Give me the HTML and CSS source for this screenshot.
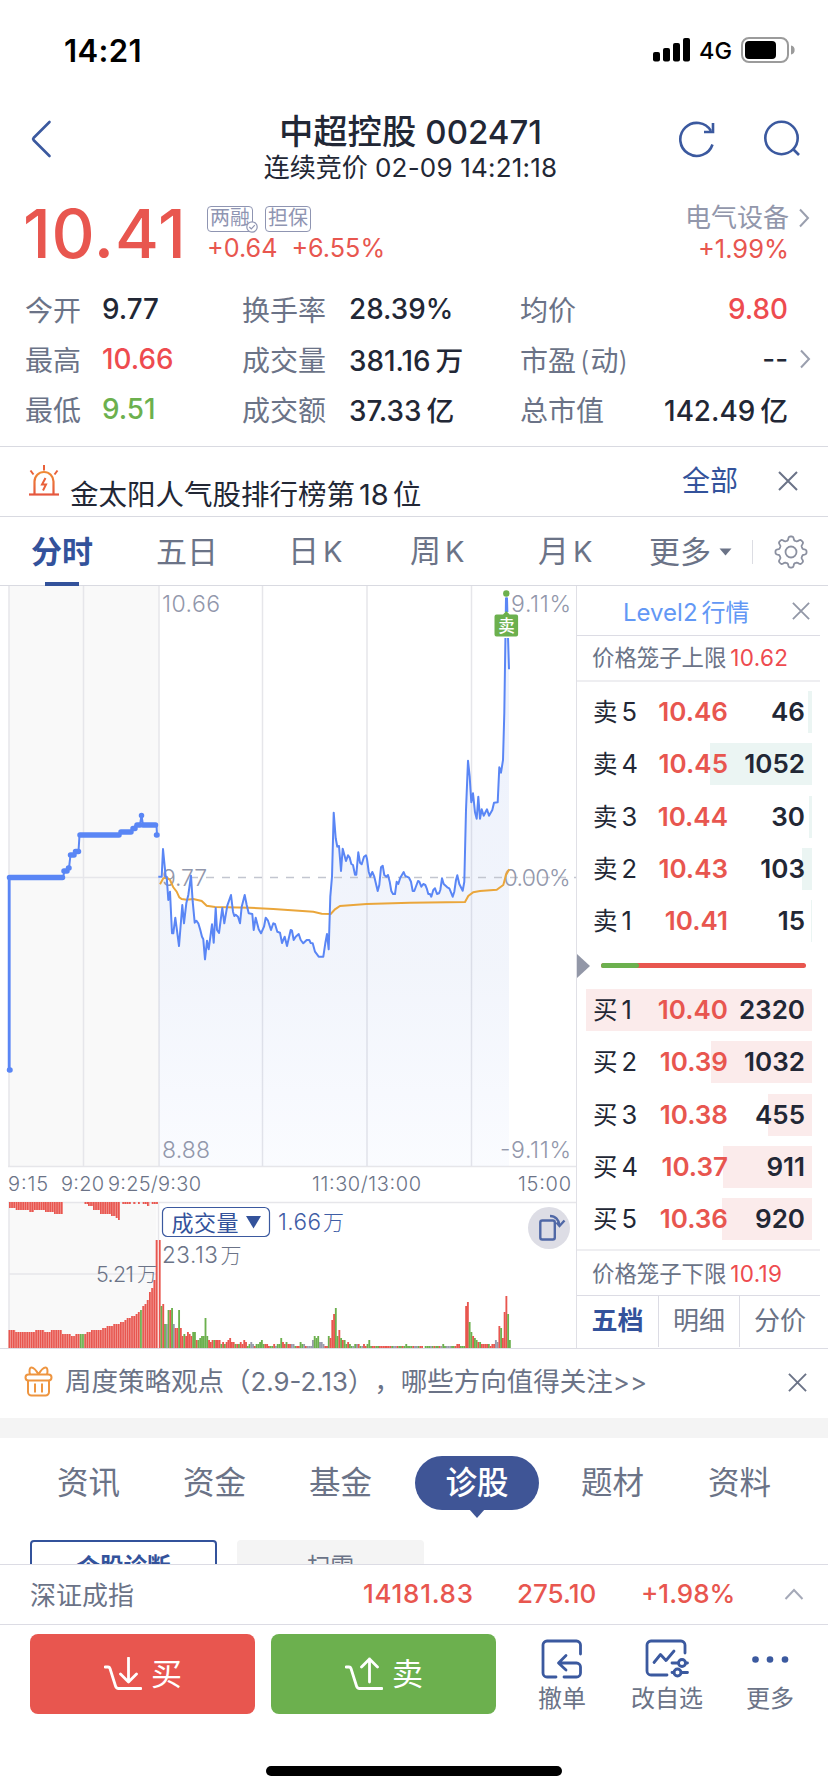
FILE: index.html
```html
<!DOCTYPE html>
<html lang="zh-CN">
<head>
<meta charset="utf-8">
<title>中超控股 002471</title>
<link rel="stylesheet" href="styles.css">
</head>
<body>
<div class="app">
  <div class="status">
    <span class="clock">14:21</span>
    <div class="status-right">
      <svg width="38" height="24" viewBox="0 0 38 24"><rect x="0" y="14" width="7" height="9.5" rx="2"/><rect x="10" y="10" width="7" height="13.5" rx="2"/><rect x="20" y="5" width="7" height="18.5" rx="2"/><rect x="30" y="0" width="7" height="23.5" rx="2"/></svg>
      <span class="net">4G</span>
      <svg width="54" height="26" viewBox="0 0 54 26"><rect x="1" y="1" width="46" height="24" rx="7" fill="none" stroke="#9b9b9b" stroke-width="2"/><rect x="4" y="4" width="31" height="18" rx="4"/><path d="M50 8.5a4.6 4.6 0 0 1 0 9z" fill="#9b9b9b"/></svg>
    </div>
  </div>

  <header class="header">
    <svg class="back" width="22" height="40" viewBox="0 0 22 40"><path d="M19.500 3 3.500 19a1.500 1.500 0 0 0 0 2l16 16"/></svg>
    <div class="titles">
      <div class="title">中超控股 <span class="code">002471</span></div>
      <div class="subtitle">连续竞价 <span class="when">02-09 14:21:18</span></div>
    </div>
    <div class="head-icons">
      <svg width="38" height="38" viewBox="0 0 38 38"><path d="M34.500 24.500a16.500 16.500 0 1 1-1.500-13.500"/><path d="M35 3v9h-9"/></svg>
      <svg width="38" height="38" viewBox="0 0 38 38"><circle cx="18.500" cy="18" r="16.200"/><path d="m30 29 6 6"/></svg>
    </div>
  </header>

  <section class="quote">
    <div class="price">10.41</div>
    <div class="change">
      <div class="tags"><span class="tag">两融<svg class="tick" width="12" height="12" viewBox="0 0 12 12"><circle cx="6" cy="6" r="5.200"/><path d="m3.300 6 2 2 3.500-3.800"/></svg></span><span class="tag">担保</span></div>
      <div class="delta"><span>+0.64</span><span>+6.55%</span></div>
    </div>
    <div class="sector">
      <div class="sector-name">电气设备</div>
      <div class="sector-pct">+1.99%</div>
    </div>
    <svg class="chev" width="12" height="20" viewBox="0 0 12 20"><path d="m2 1.500 8 8.500-8 8.500"/></svg>
  </section>

  <section class="stats">
    <span class="lbl">今开</span><span class="val">9.77</span><span class="lbl">换手率</span><span class="val">28.39%</span><span class="lbl">均价</span><span class="val end up">9.80</span><i></i>
    <span class="lbl">最高</span><span class="val up">10.66</span><span class="lbl">成交量</span><span class="val">381.16<b>万</b></span><span class="lbl">市盈<em>(</em>动<em>)</em></span><span class="val end dash">--</span><svg class="chev" width="12" height="20" viewBox="0 0 12 20"><path d="m2 1.500 8 8.500-8 8.500"/></svg>
    <span class="lbl">最低</span><span class="val down">9.51</span><span class="lbl">成交额</span><span class="val">37.33<b>亿</b></span><span class="lbl">总市值</span><span class="val end">142.49<b>亿</b></span><i></i>
  </section>

  <section class="alert">
    <svg class="siren" width="32" height="34" viewBox="0 0 32 34"><defs><linearGradient id="sg" gradientUnits="userSpaceOnUse" x1="0" y1="8" x2="0" y2="31"><stop offset="0" stop-color="#f08a35"/><stop offset="1" stop-color="#e5563f"/></linearGradient></defs><g fill="none" stroke="url(#sg)" stroke-width="2.200"><path d="M6.500 30V17.500a9.500 9.500 0 0 1 19 0V30"/><path d="M1 30.500h30"/></g><path d="M16 1v5.500M2.500 6.500l3 4M29.500 6.500l-3 4" stroke="#e9613a" stroke-width="2"/><path d="m17.500 14-3.500 6.500h4l-3 6" fill="none" stroke="#e9613a" stroke-width="2"/></svg>
    <span class="alert-text">金太阳人气股排行榜第<span class="num">18</span>位</span>
    <span class="all">全部</span>
    <svg class="x" width="20" height="20" viewBox="0 0 20 20"><path d="m1 1 18 18M19 1 1 19"/></svg>
  </section>

  <nav class="periods">
    <span class="on">分时</span><span>五日</span><span>日<em>K</em></span><span>周<em>K</em></span><span>月<em>K</em></span><span>更多</span>
    <svg class="caret" width="13" height="8" viewBox="0 0 13 8"><path d="M0.500 0.500h12l-6 7z"/></svg>
    <i class="sep"></i>
    <svg class="gear" width="34" height="34" viewBox="0 0 34 34"><path id="gear"/><circle cx="17" cy="17" r="5.500"/></svg>
  </nav>

  <main class="market">
    <svg class="chart" width="576" height="762" viewBox="0 586 576 762">
      <defs><linearGradient id="area" x1="0" y1="0" x2="0" y2="1"><stop offset="0" stop-color="#5a86f5" stop-opacity=".11"/><stop offset=".65" stop-color="#5a7fd0" stop-opacity=".08"/><stop offset="1" stop-color="#5a86f5" stop-opacity=".03"/></linearGradient></defs>
      <rect x="8.500" y="586" width="150.500" height="580" fill="#f9f9f9"/>
      <rect x="8.500" y="1203" width="148" height="145" fill="#f9f9f9"/>
      <g stroke="#e6e6ea" stroke-width="1.500" fill="none">
        <path d="M9 586V1166M83.500 586V1166M159 586V1166M262.500 586V1166M367 586V1166M471.500 586V1166M8 1166.500H576M8 1202.500H576M9 1203V1348M158.500 1203V1240M9 877.500H158M9 1274H156"/>
      </g>
      <path id="fill" fill="url(#area)"/>
      <path d="M190 877.500H576" stroke="#c3c6d0" stroke-width="1.700" stroke-dasharray="8 8" stroke-dashoffset="0" fill="none"/>
      <g class="axis">
        <text x="162" y="612" textLength="58">10.66</text>
        <text x="162" y="885.500" textLength="45">9.77</text>
        <text x="162" y="1158" textLength="48">8.88</text>
        <text x="511" y="612" textLength="60">9.11%</text>
        <text x="503.500" y="885.500" textLength="67">0.00%</text>
        <text x="500" y="1158" textLength="71">-9.11%</text>
      </g>
      <path id="avg" fill="none" stroke="#eaa63b" stroke-width="2"/>
      <path id="line" fill="none" stroke="#5a86f5" stroke-width="2" stroke-linejoin="round"/>
      <path d="M9.500 1071V877.500H63L64.500 871H67L69 868 70.500 855H74L76 851.500H78.500L79.500 835H119L121 832H131L133 828.500 136 825H140L141.500 815.500 143 825H156.500L157 835" fill="none" stroke="#5a86f5" stroke-width="2"/>
      <path d="M9.500 877.500H62.500M64 871H67M68.500 868H69M70.500 855H74M75.500 851.500H78.500M80 835H119M121 832H131M133 828.500H135M137 825H140M141.500 815.500h.01M143 825H155.500M157 835h-.5M9.500 1070h.5" fill="none" stroke="#5a86f5" stroke-width="5.500" stroke-linecap="round"/>
      <path d="M9 877V1071" stroke="#5a86f5" stroke-width="2.500"/>
      <circle cx="506.300" cy="593.500" r="3.200" fill="#6cb04e"/>
      <path d="M492 612h28v26h-28z" fill="#fff"/>
      <path d="M496.500 614.500h6.500l3.300-3.500 3.300 3.500h6.500a2 2 0 0 1 2 2v18a2 2 0 0 1-2 2h-19.600a2 2 0 0 1-2-2v-18a2 2 0 0 1 2-2z" fill="#6cb04e"/>
      <text x="498.200" y="631.500" class="mark">卖</text>
      <g class="times">
        <text x="8" y="1191" textLength="40">9:15</text><text x="61" y="1191" textLength="43">9:20</text><text x="108" y="1191" textLength="93">9:25/9:30</text><text x="312" y="1191" textLength="109">11:30/13:00</text><text x="518" y="1191" textLength="53">15:00</text>
      </g>
      <g id="bars"></g>
      <rect x="162.500" y="1207.500" width="107" height="29" rx="5" fill="#fff" stroke="#3b599f" stroke-width="1.200"/>
      <text x="171.500" y="1230.500" class="cj" fill="#33529b" textLength="67">成交量</text>
      <path d="M246 1216h15l-7.500 12.500z" fill="#33529b"/>
      <text x="278" y="1230" class="vol blue" textLength="43">1.66</text><text x="323" y="1230" class="cjs blue">万</text>
      <text x="162" y="1263" class="vol" textLength="56">23.13</text><text x="220.500" y="1263" class="cjs">万</text>
      <text x="96" y="1282" class="vols" textLength="38">5.21</text><text x="137" y="1282" class="cjs s">万</text>
      <circle cx="549" cy="1228" r="21" fill="#dddde5"/>
      <g fill="none" stroke="#5068a6" stroke-width="2.400"><rect x="540.300" y="1220.500" width="14.500" height="19" rx="2"/><path d="M550 1216c5.500 0 9 4 9.300 9"/><path d="m556.500 1222.500 3 3.500 5-5.500"/></g>
    </svg>

    <aside class="book">
      <div class="level"><span>Level2<b>行情</b></span><svg class="x light" width="18" height="18" viewBox="0 0 20 20"><path d="m1 1 18 18M19 1 1 19"/></svg></div>
      <div class="cage top">价格笼子上限<span>10.62</span></div>
      <div class="rows sell">
        <div class="row"><i class="bar" style="width:4px"></i><span>卖<em>5</em></span><span class="p">10.46</span><span class="q">46</span></div>
        <div class="row"><i class="bar" style="width:102px"></i><span>卖<em>4</em></span><span class="p">10.45</span><span class="q">1052</span></div>
        <div class="row"><i class="bar" style="width:3px"></i><span>卖<em>3</em></span><span class="p">10.44</span><span class="q">30</span></div>
        <div class="row"><i class="bar" style="width:10px"></i><span>卖<em>2</em></span><span class="p">10.43</span><span class="q">103</span></div>
        <div class="row"><i class="bar" style="width:1px"></i><span>卖<em>1</em></span><span class="p">10.41</span><span class="q">15</span></div>
      </div>
      <div class="balance"><svg width="13" height="24" viewBox="0 0 13 24"><path d="M0 0 13 12 0 24z" fill="#9297a7"/></svg><div class="meter"><i></i></div></div>
      <div class="rows buy">
        <div class="row"><i class="bar" style="width:226px"></i><span>买<em>1</em></span><span class="p">10.40</span><span class="q">2320</span></div>
        <div class="row"><i class="bar" style="width:101px"></i><span>买<em>2</em></span><span class="p">10.39</span><span class="q">1032</span></div>
        <div class="row"><i class="bar" style="width:44px"></i><span>买<em>3</em></span><span class="p">10.38</span><span class="q">455</span></div>
        <div class="row"><i class="bar" style="width:89px"></i><span>买<em>4</em></span><span class="p">10.37</span><span class="q">911</span></div>
        <div class="row"><i class="bar" style="width:90px"></i><span>买<em>5</em></span><span class="p">10.36</span><span class="q">920</span></div>
      </div>
      <div class="cage bottom">价格笼子下限<span>10.19</span></div>
      <div class="book-tabs"><span class="on">五档</span><span>明细</span><span>分价</span></div>
    </aside>
  </main>

  <section class="notice">
    <svg width="30" height="32" viewBox="0 0 30 32"><g fill="none" stroke="#ee9540" stroke-width="2"><rect x="1.500" y="8.500" width="26" height="6" rx="3"/><path d="M4 14.500V26a3.500 3.500 0 0 0 3.500 3.500h14A3.500 3.500 0 0 0 25 26V14.500M11 17.500v9M18 17.500v9"/><path d="M14.500 8.500C12 4 9.500 1.500 7.500 1.500S5 5 6 8.500M14.500 8.500c2.500-4.500 5-7 7-7S24 5 23 8.500"/></g></svg>
    <span class="notice-text">周度策略观点（<em>2.9-2.13</em>），哪些方向值得关注<em>&gt;&gt;</em></span>
    <svg class="x" width="19" height="19" viewBox="0 0 20 20"><path d="m1 1 18 18M19 1 1 19"/></svg>
  </section>
  <div class="band"></div>

  <nav class="info-tabs"><span>资讯</span><span>资金</span><span>基金</span><span class="pill">诊股</span><span>题材</span><span>资料</span></nav>
  <div class="cards"><span class="card on">个股诊断</span><span class="card">扫雷</span></div>

  <section class="index">
    <span class="index-name">深证成指</span><span class="i1">14181.83</span><span class="i2">275.10</span><span class="i3">+1.98%</span>
    <svg width="20" height="12" viewBox="0 0 20 12"><path d="m1.500 11 8.500-9 8.500 9"/></svg>
  </section>

  <footer class="actions">
    <button class="btn buy-btn"><svg width="38" height="34" viewBox="0 0 38 34"><path d="M1 10h3q1.500 0 2 1.500L11.500 29q.8 2.500 3 2.500H37M24.500 1v23M16.500 17l8 8 8-8"/></svg>买</button>
    <button class="btn sell-btn"><svg width="38" height="34" viewBox="0 0 38 34"><path d="M1 10h3q1.500 0 2 1.500L11.500 29q.8 2.500 3 2.500H37M24.500 25V2M16.500 10l8-8 8 8"/></svg>卖</button>
    <div class="act a1"><svg width="44" height="40" viewBox="0 0 44 40"><path d="M40.500 15V6a4 4 0 0 0-4-4H7a4 4 0 0 0-4 4v28a4 4 0 0 0 4 4h9M24 38h12.500a4 4 0 0 0 4-4V28a4 4 0 0 0-4-4H19M26 16.500 18.500 24l7.500 7"/></svg><span>撤单</span></div>
    <div class="act a2"><svg width="46" height="40" viewBox="0 0 46 40"><path d="M41 14V6a4 4 0 0 0-4-4H7a4 4 0 0 0-4 4v26a4 4 0 0 0 4 4h16M10 23.500l6.500-8 5.500 6 8-9.500"/><circle cx="38" cy="24" r="3.500"/><path d="M28 24h6.500M41.500 24h2"/><circle cx="33.500" cy="33.500" r="3.500"/><path d="M28 33.500h2M37 33.500h6.500"/></svg><span>改自选</span></div>
    <div class="act a3"><svg width="44" height="40" viewBox="0 0 44 40"><circle class="dot" cx="7.500" cy="20.500" r="3.300"/><circle class="dot" cx="22" cy="20.500" r="3.300"/><circle class="dot" cx="37" cy="20.500" r="3.300"/></svg><span>更多</span></div>
  </footer>
  <div class="home"></div>
</div>
<script src="chart.js"></script>
</body>
</html>
```

FILE: styles.css
```css
* { box-sizing: border-box; }
body { margin: 0; background: #fff; font-family: Inter, "Noto Sans CJK SC", sans-serif; color: #222735; }
em, i, b { font-style: normal; font-weight: inherit; }
svg { display: block; flex: none; }
.app { width: 828px; height: 1792px; overflow: hidden; display: flex; flex-direction: column; }
.app > * { flex: none; }

.status { height: 100px; padding: 0 33px 0 64px; display: flex; justify-content: space-between; align-items: center; color: #000; }
.clock { font-size: 31px; font-weight: 600; letter-spacing: .4px; }
.status-right { display: flex; align-items: center; }
.net { font-size: 23.500px; font-weight: 500; width: 50px; padding-left: 8px; }

.header { height: 94px; padding: 12px 26px 0 30px; display: grid; grid-template-columns: 124px 1fr 124px; align-items: start; }
.header svg { fill: none; stroke: #3b599f; stroke-width: 2.6; }
.back { margin-top: 7px; stroke-linecap: round; }
.titles { text-align: center; padding-right: 11px; white-space: nowrap; }
.title { font-size: 34.300px; line-height: 40px; font-weight: 500; }
.code { font-size: 33px; }
.subtitle { font-size: 26px; line-height: 32px; }
.when { font-size: 26px; letter-spacing: .2px; }
.head-icons { display: flex; gap: 47px; margin-top: 8px; }

.quote { height: 90px; padding: 0 18px 0 23px; display: grid; grid-template-columns: 184px 1fr 200px 21px; }
.price { color: #e8564f; font-size: 67px; line-height: 80px; font-weight: 500; letter-spacing: .8px; }
.change { padding-top: 12px; }
.tags { display: flex; gap: 12px; height: 27px; }
.tag { position: relative; border: 1.500px solid #8f95b2; border-radius: 4px; width: 46px; height: 26px; font-size: 20px; line-height: 23px; text-align: center; color: #8f95b2; }
.tick { position: absolute; right: -6px; bottom: -2px; fill: #fff; stroke: #8f95b2; stroke-width: 1.200; }
.delta { display: flex; gap: 14px; color: #e8564f; font-size: 25.200px; line-height: 30px; }
.sector { text-align: right; }
.sector-name { font-size: 26px; line-height: 32px; margin-top: 8px; color: #9297ab; }
.sector-pct { font-size: 25.500px; line-height: 30px; color: #e8564f; }
.chev { fill: none; stroke: #9a9fae; stroke-width: 2; justify-self: end; }
.quote .chev { margin-top: 14px; }

.stats { height: 163px; padding: 0 17px 0 25px; display: grid; grid-template-columns: 77px 140px 107px 171px 100px 168px 23px; grid-template-rows: repeat(3, 50px); align-items: center; white-space: nowrap; font-size: 28px; border-bottom: 1px solid #d9dae1; }
.lbl { color: #6b7387; }
.lbl em { font-size: 27px; margin: 0 1px 0 4px; font-weight: 300; }
.lbl em + em { margin: 0; }
.val { font-size: 27.800px; font-weight: 500; }
.val b { margin-left: 5px; }
.end { text-align: right; }
.up { color: #ee4b4f; }
.down { color: #6cb04e; }

.alert { height: 70px; padding: 0 30px 0 28px; display: flex; border-bottom: 1px solid #d9dae1; }
.siren { margin-top: 17px; }
.alert-text { font-size: 28.500px; line-height: 40px; margin: 28px 0 0 10px; white-space: nowrap; flex: 1; }
.num { margin: 0 4px; font-size: 29px; }
.all { font-size: 28px; line-height: 40px; margin-top: 14px; color: #33529b; width: 96px; }
.x { fill: none; stroke: #6b7387; stroke-width: 2; }
.x.light { stroke: #9297a7; }
.alert .x { margin-top: 24px; }

.periods { height: 69px; display: grid; grid-template-columns: 125px 132px 122px 128px 111px 70px 33px 22px 34px; padding-left: 31px; align-items: center; font-size: 31px; color: #6b7387; border-bottom: 1px solid #d9dae1; white-space: nowrap; }
.periods span { line-height: 68px; }
.periods em { margin-left: 4px; font-size: 29px; }
.periods .on { color: #33529b; font-weight: 700; justify-self: start; background: linear-gradient(#33529b, #33529b) center bottom / 34px 4px no-repeat; }
.caret { fill: #6b7387; }
.sep { width: 1px; height: 24px; background: #dcdde3; }
.gear { fill: none; stroke: #8b90a0; stroke-width: 1.800; }

.market { height: 763px; display: grid; grid-template-columns: 576px 252px; border-bottom: 1px solid #dcdce4; }
.axis { font-size: 23px; fill: #9297ab; font-weight: 300; }
.times { font-size: 20px; fill: #6b7387; font-weight: 300; }
.vol { font-size: 22.500px; font-weight: 300; }
.vols { font-size: 21.500px; font-weight: 300; }
.vol, .vols, .cjs { fill: #6b7387; }
.cj { font-size: 22px; }
.cjs { font-size: 21px; font-weight: 300; }
.cjs.s { font-size: 20px; }
.blue { fill: #3f5da5; }
.mark { font-size: 16.500px; fill: #fff; font-weight: 500; }

.book { border-left: 1.500px solid #e0e0e6; padding-right: 8px; display: flex; flex-direction: column; position: relative; }
.level { height: 50px; border-bottom: 1px solid #dcdce4; display: flex; align-items: center; justify-content: space-between; padding: 0 10px 0 46px; color: #6398f5; font-size: 24px; }
.level b { font-size: 24px; margin-left: 4px; }
.cage { height: 46px; border-bottom: 2px solid #eeeef1; padding-left: 15px; font-size: 22.400px; line-height: 44px; color: #6b7387; white-space: nowrap; }
.cage span { color: #ee4b4f; font-size: 22.500px; margin-left: 4px; letter-spacing: .3px; }
.rows { display: grid; grid-auto-rows: 42px; row-gap: 10.250px; padding-top: 9px; }
.row { position: relative; display: grid; grid-template-columns: 60px 75px 1fr; padding: 0 15px 0 16px; align-items: center; font-size: 24.500px; line-height: 42px; }
.row > span { position: relative; }
.row em { font-size: 25.500px; margin-left: 4px; }
.row .p { color: #e8564f; font-weight: 600; font-size: 26px; text-align: right; }
.row .q { font-weight: 600; font-size: 26px; text-align: right; }
.bar { position: absolute; right: 8px; top: 0; bottom: 0; }
.sell .bar { background: #ebf5f3; }
.buy .bar { background: #fbebeb; }
.balance { height: 38px; padding-top: 3px; display: flex; align-items: center; gap: 11px; margin: 3px 0 -3px; }
.meter { width: 205px; height: 5px; border-radius: 3px; background: #e8564f; overflow: hidden; }
.meter i { display: block; width: 38px; height: 5px; background: #6cb04e; border-radius: 0 3px 3px 0; }
.cage.bottom { height: 47px; margin-top: 9px; border-top: 2px solid #eeeef1; border-bottom: 1px solid #dcdce4; line-height: 45px; }
.book-tabs { display: grid; grid-template-columns: 81px 81px 81px; height: 51px; }
.book-tabs span { text-align: center; font-size: 26px; line-height: 50px; color: #6b7387; }
.book-tabs span + span { border-left: 1px solid #dcdce4; }
.book-tabs .on { color: #33529b; font-weight: 700; }

.notice { height: 69px; padding: 0 21px 3px 24px; display: flex; align-items: center; font-size: 26.500px; color: #6b7387; white-space: nowrap; text-spacing-trim: space-all; }
.notice-text { flex: 1; margin-left: 11px; line-height: 40px; margin-top: -2px; }
.notice em { font-size: 25.800px; }
.band { height: 20px; background: #f4f4f4; }
.info-tabs { height: 102px; padding: 18px 0 0 57px; display: grid; grid-template-columns: 126px 126px 106px 166px 127px auto; font-size: 31.500px; line-height: 54px; color: #6b7387; }
.pill { position: relative; width: 124px; height: 54px; border-radius: 27px; background: #3f5596; color: #fff; text-align: center; font-weight: 500; }
.pill::after { content: ""; position: absolute; left: 54px; top: 53px; border: 8px solid transparent; border-top: 9px solid #3f5596; border-bottom: 0; }
.cards { height: 24px; padding-left: 30px; display: flex; gap: 20px; overflow: hidden; }
.card { width: 187px; height: 60px; border-radius: 4px; background: #f4f4f4; text-align: center; font-size: 23.500px; line-height: 54px; color: #6b7387; }
.card.on { background: #fff; border: 2px solid #33529b; color: #33529b; font-weight: 700; line-height: 50px; }

.index { height: 61px; border-top: 1.500px solid #dcdce4; border-bottom: 1.500px solid #dcdce4; padding: 0 0 2px 30px; display: grid; grid-template-columns: 333px 154px 124px 143px 20px; align-items: center; font-size: 26px; font-weight: 500; color: #e8564f; }
.index-name { color: #6b7387; font-size: 26px; font-weight: 400; }
.i1 { letter-spacing: .7px; }
.index svg { fill: none; stroke: #a5a9b8; stroke-width: 2; }

.actions { height: 141px; padding: 9px 0 0 30px; display: flex; align-items: flex-start; }
.btn { border: 0; width: 225px; height: 80px; padding: 0 0 0 1px; margin-right: 16px; border-radius: 8px; color: #fff; font: 31px/80px Inter, "Noto Sans CJK SC", sans-serif; display: flex; align-items: center; justify-content: center; gap: 9px; }
.btn svg { fill: none; stroke: #fff; stroke-width: 2.800; stroke-linecap: round; stroke-linejoin: round; }
.buy-btn { background: #e8564f; }
.sell-btn { background: #6cb04e; }
.act { display: flex; flex-direction: column; align-items: center; color: #6b7387; font-size: 24px; line-height: 30px; padding-top: 5px; gap: 5px; }
.act svg { fill: none; stroke: #3b599f; stroke-width: 2.800; stroke-linecap: round; stroke-linejoin: round; }
.act .dot { fill: #3b599f; stroke: none; }
.a1 { width: 72px; margin-left: 14px; }
.a2 { width: 80px; margin-left: 29px; }
.a3 { width: 60px; margin-left: 33px; }
.home { width: 296px; height: 10px; border-radius: 5px; background: #000; margin-left: 266px; }
```

FILE: chart.js
```js
const NS = "http://www.w3.org/2000/svg";
const byId = id => document.getElementById(id);

// Price points in chart coordinates, tripled: [x, y] pairs from two halves of the session.
const morning = "55,290 65,290 69,207 77,290 80,290 85,360 90,335 96,460 100,460 106,413 117,498 127,375 132,430 139,370 145,345 153,287 158,365 164,428 169,422 175,430 181,450 186,470 190,478 195,538 201,482 206,508 216,433 221,488 227,384 231,450 237,459 247,384 253,430 262,377 273,345 279,395 283,408 287,404 294,410 300,430 305,380 314,345 320,375 326,400 337,402 341,450 347,413 356,448 363,460 372,440 377,413 384,422 393,450 400,430 405,432 412,455 420,458 426,489 434,470 441,498 452,450 456,452 461,480 467,470 476,462 482,480 490,490 500,480 508,480 512,489 518,490 525,515 536,530 550,530 556,490 561,462 566,508 571,350 576,290";
const afternoon = "71,698 77,775 82,800 87,798 93,873 98,806 108,843 114,826 119,833 124,852 129,855 135,884 139,884 145,817 150,848 155,853 162,830 168,826 171,837 176,875 181,890 187,876 193,890 203,933 208,915 213,862 218,857 223,885 229,890 234,885 239,905 244,933 249,942 255,942 260,905 265,912 271,893 281,876 286,888 297,893 303,905 308,933 313,933 324,903 328,905 334,920 340,912 346,915 350,925 355,942 360,942 364,950 370,930 375,925 381,942 387,940 391,930 396,895 401,912 412,922 418,925 422,935 428,950 433,935 438,900 442,886 448,912 458,932 463,905 468,690 474,542 479,590 484,667 489,640 495,697 500,716 505,650 510,716 515,688 521,707 531,688 537,707 547,690 552,668 563,667 568,562 573,578 579,540 583,400 588,55 591,55 594,170 597,268";
const avgA = "60,313 70,295 80,292 90,300 100,322 110,335 118,352 125,357 140,359 160,357 185,363 200,377 225,381 330,383 400,387 520,395 545,401 572,402 585,388";
const avgB = "90,978 170,972 300,968 465,966 475,948 490,937 510,933 560,929 580,915 588,885 598,868";
const at = (s, ox, oy) => s.split(" ").map(p => { const [x, y] = p.split(",").map(Number); return (ox + x / 3).toFixed(1) + " " + (oy + y / 3).toFixed(1); });
const price = at(morning, 140, 780).concat(at(afternoon, 310, 580));
byId("line").setAttribute("d", "M" + price.join("L"));
byId("fill").setAttribute("d", "M159 1166L" + price.join("L") + "V1166Z");
byId("avg").setAttribute("d", "M" + at(avgA, 140, 780).concat(at(avgB, 310, 580)).join("L"));

const color = { r: "#e8564f", g: "#6cb04e", s: "#989aab" };
function bar(x, y, w, h, c, o) {
  const r = document.createElementNS(NS, "rect");
  Object.entries({ x, y, width: w, height: h, fill: c, opacity: o || 1 }).forEach(([k, v]) => r.setAttribute(k, v));
  byId("bars").appendChild(r);
}

// Call auction: [end x, height]
const auction = [[15.7,18],[36,16],[44.5,18],[49.7,16],[63,18],[70,14],[74.7,12],[86.7,14],[90.7,16],[102,18],[106.7,20],[113.5,22],[120,24],[124.5,26],[126.8,28],[131,30],[135.8,32],[138,34],[140.3,36],[142.8,38],[144.8,42],[147,44],[149.3,48],[151.8,56],[153.8,60],[156,68],[161,108]];
for (let i = 0; i < 67; i++) {
  const x = 8.5 + i * 2.23, h = (auction.find(a => x + 1 < a[0]) || [0, 108])[1];
  const c = (x > 78 && x < 83) || (x > 139.5 && x < 142) ? color.g : color.r;
  bar(x, 1348 - h, 2.23, h, c);
  bar(x + 1.63, 1348 - h, 0.6, h, "#fff", 0.5);
}
const hanging = [[9,15.7,6],[15.7,29.3,8],[29.3,34,10],[34,45,8],[45,54,10],[54,63,12],[84.5,88,2],[88,93,4],[93,100,8],[100,111,12],[111,115.7,14],[115.7,118,16],[118,120,18],[122.3,131,2],[133.3,135.6,2],[138,140,2],[142.7,147,2],[147,149.3,4],[151.7,158,2]];
hanging.forEach(([a, b, h]) => {
  bar(a, 1202, b - a, h, color.r);
  for (let x = a; x < b - 0.5; x += 2.25) bar(x + 1.6, 1202, 0.6, h, "#fff", 0.5);
});

// Minute volume: colour + height
const volume = ("r108 g42 r44 g24 s24 g38 r38 g40 s24 r20 r20 g38 r20 r12 g14 r12 r16 r14 r12 g16 g16 r8 g8 g10 g12 g12 g30 g12 r8 r6 r8 g8 r8 r8 r8 g4 r6 g4 r6 r8 r10 r6 r6 g4 r4 g4 r6 r4 r8 r6 g2 g4 s6 s4 r2 g4 g4 g6 g8 g4 r4 r4 r2 g2 g2 r4 s2 g4 g4 g10 r6 r4 g6 r4 r4 s4 s4 g2 r2 r2 g6 g4 s4 r2 s2 s2 s2 s8 g12 g10 g12 s6 s6 s4 r2 r2 g12 r10 r28 r34 g40 g12 r18 g10 r8 g8 g4 r6 g4 g2 s2 g4 s4 r4 g2 s2 r4 r2 g4 g8 "
  + "g2 r2 r2 g2 g2 r2 r2 r2 r2 r2 r2 r2 g2 s2 s2 r2 g2 g2 r2 g2 g4 g2 g2 g2 r2 s2 s2 g2 r2 r2 g0 g2 g2 g2 s2 g2 r2 g2 g2 r2 s2 g4 g2 s2 s2 s2 g2 g2 r2 r4 r4 g2 g2 g2 r42 r46 g26 g16 r12 g10 g8 r6 g6 r4 r4 r4 r4 g4 r2 r4 r4 s8 s6 r22 g20 r10 r36 r52 g34 g8").split(" ");
const peak = volume.indexOf("r42");
volume.forEach((v, i) => {
  const h = +v.slice(1);
  const x = i <= peak ? 158.8 + i * (465.2 - 158.8) / peak : 465.2 + (i - peak) * 1.75;
  if (h) bar(x, 1348 - h, 1.85, h, color[v[0]]);
});

// Gear outline with eight rounded teeth
let d = "";
for (let i = 0; i <= 160; i++) {
  const a = i / 160 * Math.PI * 2;
  const k = Math.cos(a * 8 );
  const r = 13.7 + 1.9 * Math.tanh(k * 2);
  d += (i ? "L" : "M") + (17 + r * Math.sin(a)).toFixed(2) + " " + (17 - r * Math.cos(a)).toFixed(2);
}
byId("gear").setAttribute("d", d + "Z");
```
